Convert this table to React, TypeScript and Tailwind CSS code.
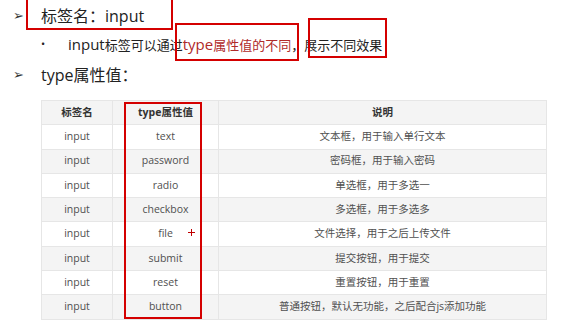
import React from "react";

const rows = [
  { type: "text", desc: "文本框，用于输入单行文本" },
  { type: "password", desc: "密码框，用于输入密码" },
  { type: "radio", desc: "单选框，用于多选一" },
  { type: "checkbox", desc: "多选框，用于多选多" },
  { type: "file", desc: "文件选择，用于之后上传文件" },
  { type: "submit", desc: "提交按钮，用于提交" },
  { type: "reset", desc: "重置按钮，用于重置" },
  { type: "button", desc: "普通按钮，默认无功能，之后配合js添加功能" },
];

export default function App() {
  return (
    <div
      className="relative w-[577px] h-[332px] overflow-hidden bg-white text-[#222]"
      style={{ fontFamily: '"Open Sans", "Noto Sans CJK SC", sans-serif' }}
    >
      {/* 标题 */}
      <div className="h-[32px] flex items-center">
        <span className="w-[41px] pl-[13px] text-[13px] text-[#333] font-['DejaVu_Sans']">➢</span>
        <span className="text-[16px]">标签名：input</span>
      </div>

      <div className="h-[24px] flex items-center">
        <span className="w-[68px] pl-[41px] text-[11px]">•</span>
        <span className="text-[13px]">
          <span className="text-[15px]">input</span>标签可以通过
          <span className="text-[#b02a2a]">
            <span className="text-[15px]">type</span>属性值的不同
          </span>
          ，展示不同效果
        </span>
      </div>

      <div className="mt-[7px] h-[24px] flex items-center">
        <span className="w-[41px] pl-[13px] text-[13px] text-[#333] font-['DejaVu_Sans']">➢</span>
        <span className="text-[16px]">type属性值：</span>
      </div>

      {/* 表格 */}
      <div className="mt-[13px] ml-[41px] w-[506px]">
        <table className="w-full table-fixed border-collapse text-[10.5px] text-[#505050]">
          <colgroup>
            <col className="w-[71px]" />
            <col className="w-[106px]" />
            <col />
          </colgroup>
          <thead>
            <tr className="h-[24.3px] bg-[#f4f4f4] text-[#333] font-bold">
              <th className="border border-[#e6e6e6]">标签名</th>
              <th className="border border-[#e6e6e6]">type属性值</th>
              <th className="border border-[#e6e6e6]">说明</th>
            </tr>
          </thead>
          <tbody>
            {rows.map((r, i) => (
              <tr key={r.type} className={`h-[24.3px] ${i % 2 === 1 ? "bg-[#f4f4f4]" : "bg-white"}`}>
                <td className="border border-[#e6e6e6] text-center">input</td>
                <td className="border border-[#e6e6e6] text-center">{r.type}</td>
                <td className="border border-[#e6e6e6] text-center">{r.desc}</td>
              </tr>
            ))}
          </tbody>
        </table>
      </div>

      {/* 红色标注框 */}
      <div className="absolute left-[26px] top-[-2px] w-[147px] h-[32px] border-2 border-[#d40000]" />
      <div className="absolute left-[175px] top-[23px] w-[124px] h-[38px] border-2 border-[#d40000]" />
      <div className="absolute left-[308px] top-[18px] w-[79px] h-[40px] border-2 border-[#d40000]" />
      <div className="absolute left-[124px] top-[102px] w-[78px] h-[217px] border-2 border-[#d40000]" />

      {/* 光标 */}
      <div className="absolute left-[188px] top-[229px] w-[7px] h-[7px]">
        <div className="absolute left-[3px] top-0 w-[1px] h-[7px] bg-[#c00000]" />
        <div className="absolute left-0 top-[3px] w-[7px] h-[1px] bg-[#c00000]" />
      </div>
    </div>
  );
}
